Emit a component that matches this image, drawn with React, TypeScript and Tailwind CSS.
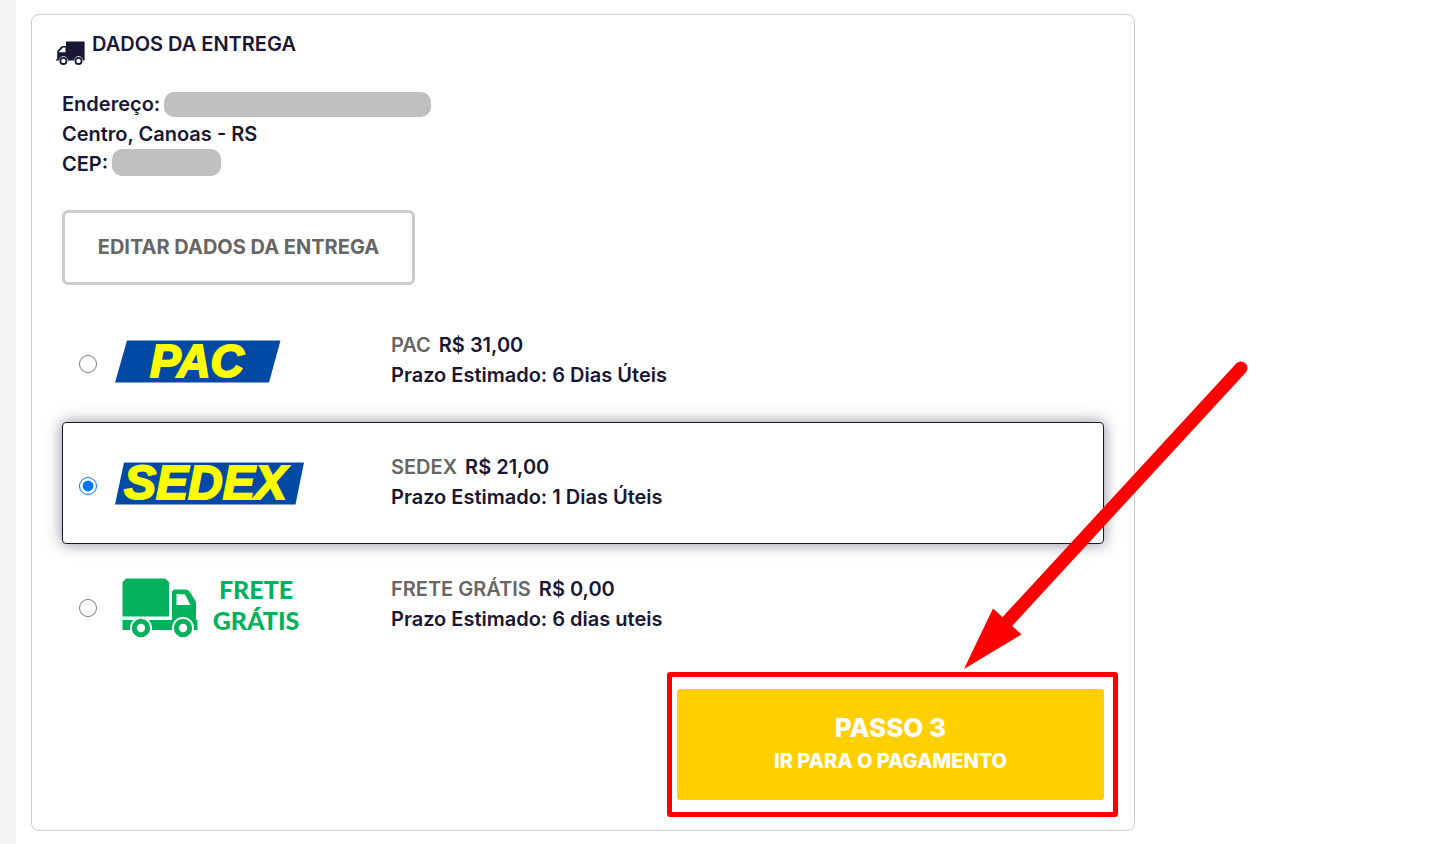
import React, { useState } from 'react';

interface ShippingOption {
  id: string;
  name: string;
  price: string;
  deadline: string;
  logo: React.ReactNode;
}

const TruckIcon: React.FC = () => (
  <svg className="mt-3 h-6 w-[29px] shrink-0" viewBox="0 0 29 24" fill="#181735" aria-hidden="true">
    <path
      fillRule="evenodd"
      d="M10 0.5H28.6V19.6H0V18.3H1.2V10.2L5.3 5.6Q6 5 7 5H10ZM9.5 6.5H7L2.6 11.3H9.5Z"
    />
    <circle cx="7.4" cy="19.9" r="4.6" fill="#fff" />
    <circle cx="22.5" cy="19.9" r="4.6" fill="#fff" />
    <circle cx="7.4" cy="19.9" r="3.1" fill="#fff" stroke="#181735" strokeWidth="1.8" />
    <circle cx="22.5" cy="19.9" r="3.1" fill="#fff" stroke="#181735" strokeWidth="1.8" />
  </svg>
);

const PacLogo: React.FC = () => (
  <svg className="overflow-visible" width="166" height="43" viewBox="0 0 166 43" aria-hidden="true">
    <polygon points="12,0.5 165.5,0.5 154,42.5 0,42.5" fill="#004aa3" />
    <text x="35" y="37" fill="#ffff00" stroke="#ffff00" strokeWidth="2" className="font-['Liberation_Sans',sans-serif] text-[46px] font-bold italic">
      PAC
    </text>
  </svg>
);

const SedexLogo: React.FC = () => (
  <svg className="overflow-visible" width="190" height="43" viewBox="0 0 190 43" aria-hidden="true">
    <polygon points="9,0.5 189,0.5 180.5,42.5 0,42.5" fill="#004aa3" />
    <text x="9" y="37" fill="#ffff00" stroke="#ffff00" strokeWidth="2" className="font-['Liberation_Sans',sans-serif] text-[48px] font-bold italic">
      SEDEX
    </text>
  </svg>
);

const FreeShippingLogo: React.FC = () => (
  <svg className="overflow-visible" width="190" height="66" viewBox="0 -6 190 66" fill="#03b15c" aria-hidden="true">
    <path d="M11 0.5H50L54 4V38.5H7.500V4Z" />
    <path
      fillRule="evenodd"
      d="M57 13.500L59 11.500H71Q73.500 11.500 75 14L81 24V42H82.500V52H7.500V42H57ZM61.500 16V27H75.500L70 16.500Z"
    />
    <circle cx="26" cy="50" r="11" fill="#fff" />
    <circle cx="68" cy="50" r="11" fill="#fff" />
    <circle cx="26" cy="50" r="6.700" fill="#fff" stroke="#03b15c" strokeWidth="5" />
    <circle cx="68" cy="50" r="6.700" fill="#fff" stroke="#03b15c" strokeWidth="5" />
    <g className="font-['Lato',sans-serif] text-[25px] font-black" textAnchor="middle">
      <text x="141" y="21">FRETE</text>
      <text x="141" y="52">GRÁTIS</text>
    </g>
  </svg>
);

const OPTIONS: ShippingOption[] = [
  { id: 'pac', name: 'PAC', price: 'R$ 31,00', deadline: '6 Dias Úteis', logo: <PacLogo /> },
  { id: 'sedex', name: 'SEDEX', price: 'R$ 21,00', deadline: '1 Dias Úteis', logo: <SedexLogo /> },
  { id: 'gratis', name: 'FRETE GRÁTIS', price: 'R$ 0,00', deadline: '6 dias uteis', logo: <FreeShippingLogo /> },
];

const ShippingRow: React.FC<{
  option: ShippingOption;
  selected: boolean;
  onSelect: (id: string) => void;
}> = ({ option, selected, onSelect }) => (
  <label
    htmlFor={option.id}
    className={`flex min-h-[122px] cursor-pointer items-center rounded border pl-4 ${
      selected ? 'border-[#181735] shadow-[0_0_15px_rgba(24,23,53,0.5)]' : 'border-transparent'
    }`}
  >
    <input
      type="radio"
      id={option.id}
      name="frete"
      checked={selected}
      onChange={() => onSelect(option.id)}
      className="mt-1.5 mr-[18px] size-[18px] shrink-0"
    />
    <span className="w-[276px] shrink-0">{option.logo}</span>
    <span className="pb-0.5">
      <span className="mr-2 text-[#666]">{option.name}</span>
      {option.price}
      <br />
      Prazo Estimado: {option.deadline}
    </span>
  </label>
);

const App: React.FC = () => {
  const [selected, setSelected] = useState<string>('sedex');

  return (
    <div className="min-h-screen overflow-x-hidden bg-[#f5f5f8] pl-4 font-['Inter',sans-serif] text-[20px] leading-[30px] font-semibold text-[#181735]">
      <main className="min-h-screen bg-white px-[15px] pt-[14px] pb-[13px]">
        <section className="max-w-[1104px] rounded-lg border border-[#ccc] pt-[14px] pb-[30px]">
          <header className="flex items-start gap-[7px] pl-6">
            <TruckIcon />
            <h2>DADOS DA ENTREGA</h2>
          </header>

          <div className="px-[30px] pt-6">
            <address className="not-italic">
              <div className="flex items-center gap-1">
                Endereço: <span className="h-[25px] w-[267px] rounded-[10px] bg-[#c0c0c0]" />
              </div>
              <div>Centro, Canoas - RS</div>
              <div className="flex items-start gap-1">
                CEP: <span className="h-[27px] w-[109px] rounded-[10px] bg-[#c0c0c0]" />
              </div>
            </address>

            <button
              type="button"
              className="mt-[31px] h-[75px] w-[353px] rounded-md border-3 border-[#ccc] pb-0.5 font-bold text-[#666]"
            >
              EDITAR DADOS DA ENTREGA
            </button>

            <div className="mt-[15px]">
              {OPTIONS.map((option) => (
                <ShippingRow
                  key={option.id}
                  option={option}
                  selected={option.id === selected}
                  onSelect={setSelected}
                />
              ))}
            </div>

            <div className="relative mt-[23px] ml-auto w-[427px]">
              <button
                type="button"
                className="h-[111px] w-full rounded-[3px] bg-[#ffcf00] pb-1 font-extrabold text-white"
              >
                <span className="block text-[26px] leading-9">PASSO 3</span>
                <span className="block">IR PARA O PAGAMENTO</span>
              </button>

              {/* highlight around the button and the arrow that points at it */}
              <div className="pointer-events-none absolute -top-[17px] -right-[14px] -bottom-[17px] -left-[10px] rounded-[3px] border-5 border-[#f00]" />
              <svg
                className="pointer-events-none absolute -right-[146px] bottom-[128px]"
                width="290"
                height="314"
                viewBox="0 0 290 314"
                aria-hidden="true"
              >
                <line x1="45" y1="266" x2="281" y2="10" stroke="#f00" strokeWidth="13" strokeLinecap="round" />
                <polygon points="4,311 33,250.500 61.500,276.500" fill="#f00" />
              </svg>
            </div>
          </div>
        </section>
      </main>
    </div>
  );
};

export default App;
